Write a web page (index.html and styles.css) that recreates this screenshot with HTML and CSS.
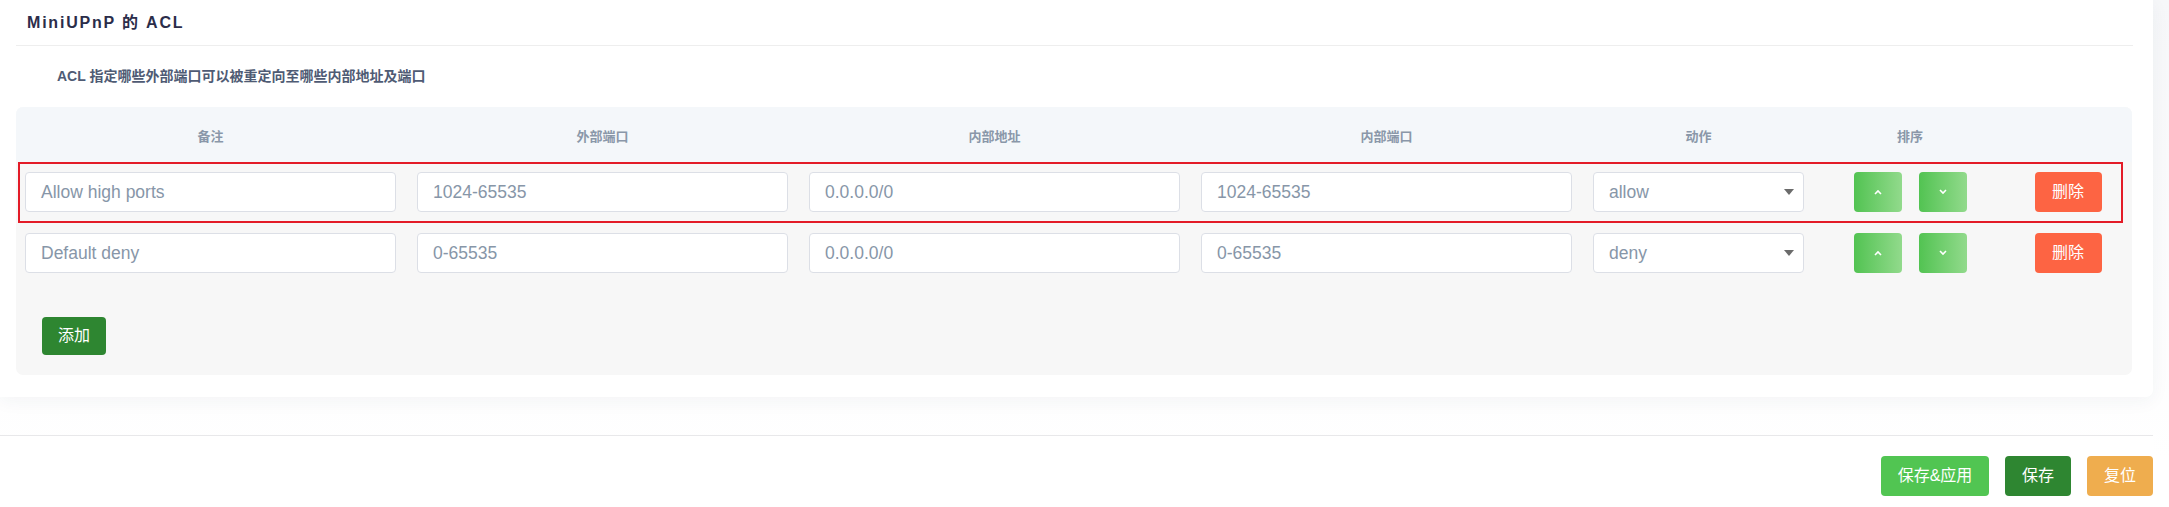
FILE: index.html
```html
<!DOCTYPE html>
<html lang="zh">
<head>
<meta charset="utf-8">
<title>MiniUPnP 的 ACL</title>
<link rel="stylesheet" href="styles.css">
</head>
<body>
<div class="page">
  <section class="card">
    <h3 class="card-title">MiniUPnP 的 ACL</h3>
    <p class="card-desc">ACL 指定哪些外部端口可以被重定向至哪些内部地址及端口</p>
    <div class="table">
      <div class="row head">
        <div class="th">备注</div>
        <div class="th">外部端口</div>
        <div class="th">内部地址</div>
        <div class="th">内部端口</div>
        <div class="th">动作</div>
        <div class="th">排序</div>
        <div class="th"></div>
      </div>
      <div class="row body highlighted">
        <div class="field">Allow high ports</div>
        <div class="field">1024-65535</div>
        <div class="field">0.0.0.0/0</div>
        <div class="field">1024-65535</div>
        <div class="field select">allow<span class="caret"></span></div>
        <div class="sort">
          <button class="btn-sort"><svg width="10" height="6" viewBox="0 0 10 6"><polyline points="2,5 5,2 8,5" fill="none" stroke="#fff" stroke-width="1.6"/></svg></button>
          <button class="btn-sort"><svg width="10" height="6" viewBox="0 0 10 6"><polyline points="2,1 5,4 8,1" fill="none" stroke="#fff" stroke-width="1.6"/></svg></button>
        </div>
        <div class="del-cell"><button class="btn btn-del">删除</button></div>
      </div>
      <div class="row body">
        <div class="field">Default deny</div>
        <div class="field">0-65535</div>
        <div class="field">0.0.0.0/0</div>
        <div class="field">0-65535</div>
        <div class="field select">deny<span class="caret"></span></div>
        <div class="sort">
          <button class="btn-sort"><svg width="10" height="6" viewBox="0 0 10 6"><polyline points="2,5 5,2 8,5" fill="none" stroke="#fff" stroke-width="1.6"/></svg></button>
          <button class="btn-sort"><svg width="10" height="6" viewBox="0 0 10 6"><polyline points="2,1 5,4 8,1" fill="none" stroke="#fff" stroke-width="1.6"/></svg></button>
        </div>
        <div class="del-cell"><button class="btn btn-del">删除</button></div>
      </div>
      <div class="add-row">
        <button class="btn btn-add">添加</button>
      </div>
    </div>
  </section>
  <footer class="footer">
    <button class="btn btn-apply">保存&amp;应用</button>
    <button class="btn btn-save">保存</button>
    <button class="btn btn-reset">复位</button>
  </footer>
</div>
</body>
</html>
```

FILE: styles.css
```css
* { box-sizing: border-box; }

html, body {
  margin: 0;
  padding: 0;
  background: #ffffff;
  font-family: "Liberation Sans", "Noto Sans CJK SC", sans-serif;
}

.page {
  width: 2169px;
  height: 507px;
  overflow: hidden;
  background: linear-gradient(to bottom, #f6f7f9 0px, #ffffff 460px);
}

.card {
  width: 2153px;
  height: 397px;
  background: #ffffff;
  border-radius: 0 0 7px 0;
  box-shadow: 0 4px 18px rgba(40, 50, 80, 0.05);
  padding: 0 20px 0 16px;
  display: flex;
  flex-direction: column;
}

.card-title {
  margin: 0;
  height: 46px;
  padding: 14px 0 0 11px;
  font-size: 16px;
  font-weight: 700;
  letter-spacing: 1.8px;
  color: #2b2d4a;
  border-bottom: 1px solid #eeeeee;
  line-height: 18px;
}

.card-desc {
  margin: 0;
  padding: 22px 0 0 41px;
  height: 61px;
  font-size: 14px;
  font-weight: 700;
  color: #4f5b74;
  line-height: 16px;
}

.table {
  width: 2116px;
  border-radius: 7px;
  background: #f7f7f7;
  overflow: hidden;
  display: flex;
  flex-direction: column;
}

.row {
  display: grid;
  grid-template-columns: 371px 371px 371px 371px 211px 170px 104px;
  column-gap: 21px;
  padding: 0 12px 0 9px;
  align-items: center;
}

.row.head {
  height: 55px;
  background: #f4f7fa;
}

.th {
  text-align: center;
  font-size: 13px;
  font-weight: 700;
  color: #8a97a9;
  padding-top: 1px;
}

.row.body {
  position: relative;
  padding-top: 10px;
  padding-bottom: 11px;
}

.row.highlighted::after {
  content: "";
  position: absolute;
  left: 2px;
  right: 9px;
  top: 0;
  height: 57px;
  border: 2px solid #e31b27;
  pointer-events: none;
}

.field {
  height: 40px;
  background: #ffffff;
  border: 1px solid #dcdfe6;
  border-radius: 4px;
  padding: 0 15px;
  display: flex;
  align-items: center;
  font-size: 17.5px;
  color: #8796a8;
}

.field.select {
  position: relative;
  justify-content: space-between;
  padding-right: 9px;
}

.caret {
  width: 0;
  height: 0;
  border-left: 5px solid transparent;
  border-right: 5px solid transparent;
  border-top: 6px solid #6b6b6b;
}

.sort {
  display: flex;
  justify-content: center;
  gap: 17px;
}

.btn-sort {
  width: 48px;
  height: 40px;
  border: none;
  border-radius: 4px;
  background: linear-gradient(to right, #52c352, #92da8c);
  display: flex;
  align-items: center;
  justify-content: center;
  padding: 0;
}

.del-cell {
  display: flex;
  justify-content: center;
}

.btn {
  height: 40px;
  border: none;
  border-radius: 4px;
  color: #ffffff;
  font-family: "Liberation Sans", "Noto Sans CJK SC", sans-serif;
  font-size: 16px;
  padding: 0 17px;
  line-height: 40px;
}

.btn-del {
  width: 67px;
  padding: 0;
  background: #fd6443;
}

.add-row {
  padding: 33px 0 20px 26px;
}

.btn-add {
  height: 38px;
  width: 64px;
  padding: 0;
  line-height: 38px;
  background: #2e8631;
}

.footer {
  margin-top: 38px;
  height: 72px;
  background: #ffffff;
  border-top: 1px solid #e8e8ea;
  width: 2153px;
  display: flex;
  justify-content: flex-end;
  align-items: flex-start;
  gap: 16px;
  padding-top: 20px;
  padding-right: 0;
}

.btn-apply {
  width: 108px;
  padding: 0;
  background: #51c552;
}

.btn-save {
  width: 66px;
  padding: 0;
  background: #2e8631;
}

.btn-reset {
  width: 66px;
  padding: 0;
  background: #efad4e;
}
```
